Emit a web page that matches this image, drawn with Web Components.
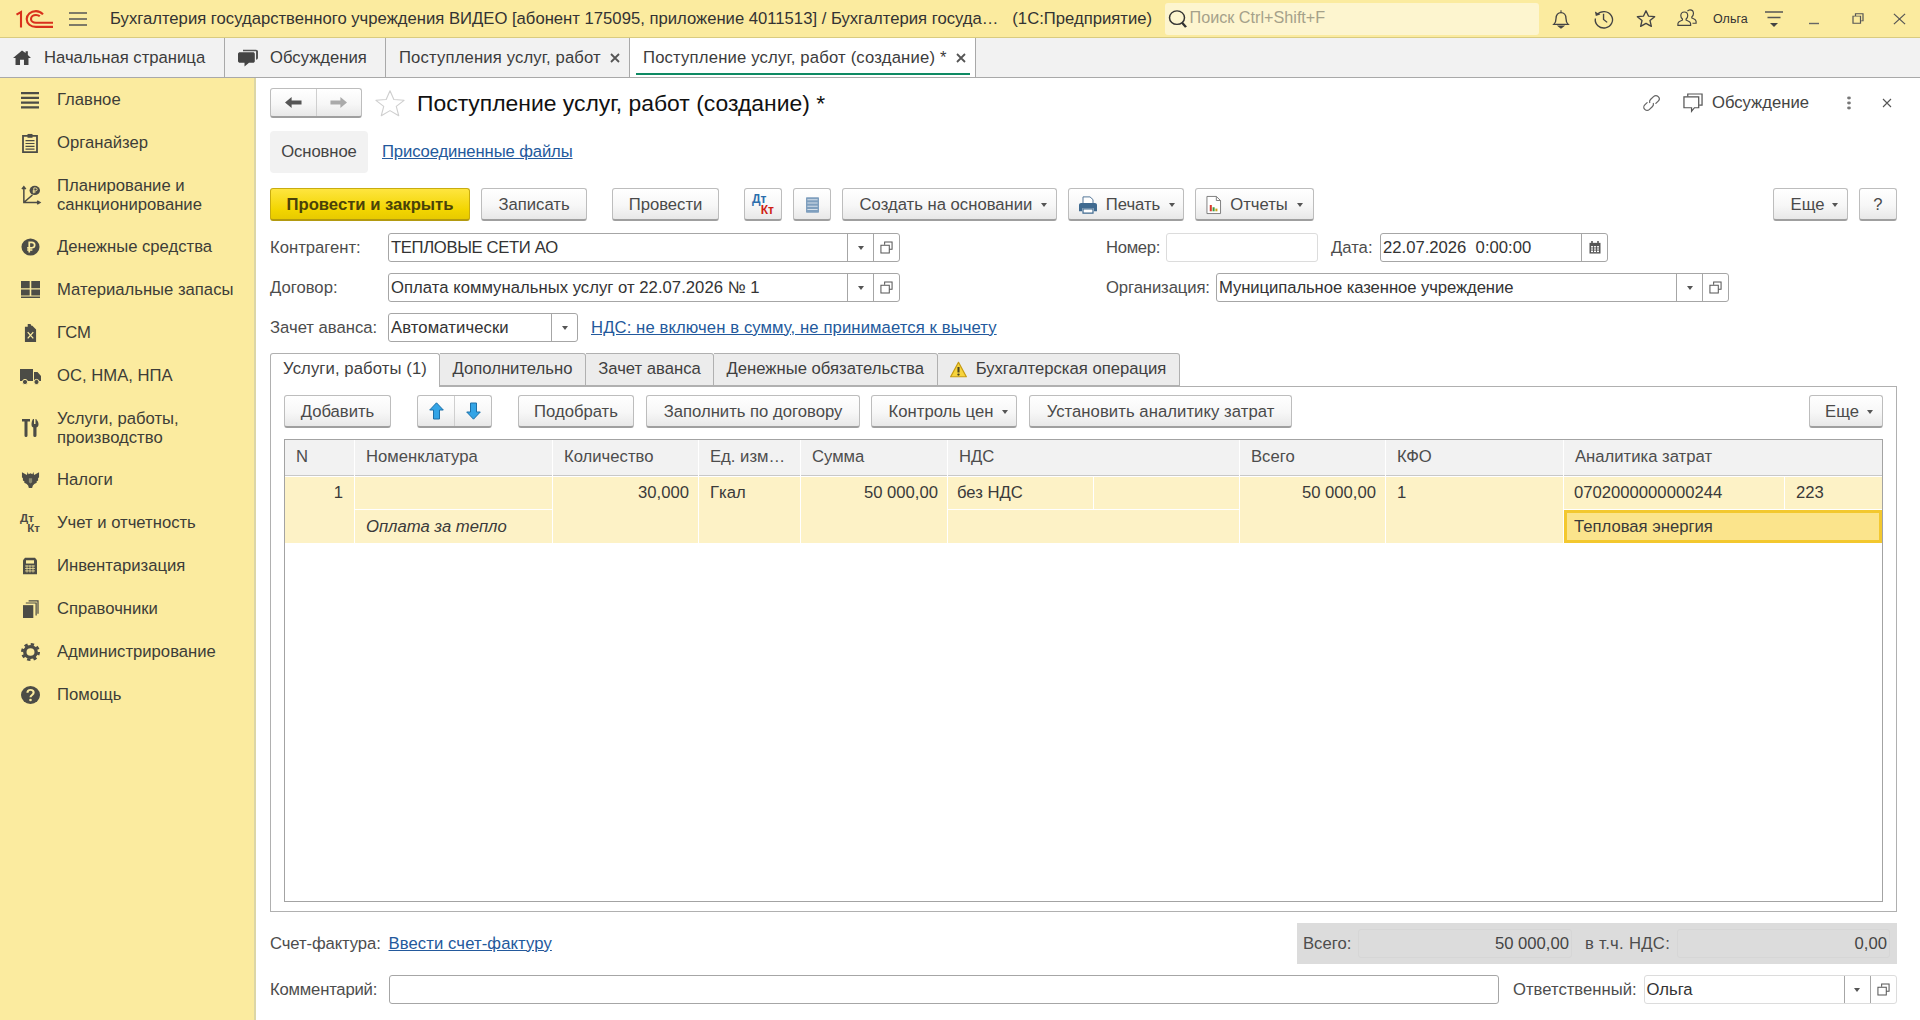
<!DOCTYPE html>
<html lang="ru"><head><meta charset="utf-8"><title>Поступление услуг, работ</title>
<style>
html,body{margin:0;height:100%;overflow:hidden;background:#fff}
body{font:16.67px "Liberation Sans",Arial,sans-serif;color:#333}
</style></head><body>
<x-app></x-app>
<script>
const ICONS={
 logo:[37,18,'<g fill="none" stroke="#d9301c" stroke-width="2.1"><path d="M.5 4.6 5 2v15.5"/><path d="M27 4.4C25 2.2 22.6 1.1 20 1.1c-5.400 0-9.300 3.600-9.300 8 0 4.500 4 7.800 9.300 7.800H37"/><path d="M23.800 6.300C22.800 5.400 21.500 5 20 5c-2.800 0-5 1.800-5 4 0 2.300 2.200 3.800 5 3.800H37"/></g>'],
 burger:[18,14,'<path d="M0 1h18M0 7h18M0 13h18" stroke="#555" stroke-width="1.400"/>'],
 search:[20,20,'<circle cx="9" cy="8.500" r="7.500" fill="none" stroke="#333" stroke-width="1.500"/><path d="M14 14l4 5" stroke="#333" stroke-width="2.500"/>'],
 bell:[20,24,'<path d="M2 18.500c2-2 2.500-4 2.500-7.500 0-4 2.300-6.800 5.500-6.800s5.500 2.800 5.500 6.800c0 3.500.5 5.500 2.500 7.500z" fill="none" stroke="#444" stroke-width="1.500"/><path d="M10 1.500v3M7 20.500h6l-3 2.500z" stroke="#444" fill="#444" stroke-width="1.200"/>'],
 history:[22,22,'<path d="M3.500 6.500A9.500 9.500 0 1 1 1.500 11" fill="none" stroke="#444" stroke-width="1.500"/><path d="M1 3l1 5 5-1.500z" fill="#444"/><path d="M10.500 5.500V12l4 3.500" fill="none" stroke="#444" stroke-width="1.500"/>'],
 starO:[22,22,'<path d="M11 2l2.700 6.200 6.800.7-5.100 4.500 1.500 6.700L11 16.600l-5.900 3.500 1.500-6.700L1.500 8.900l6.800-.7z" fill="none" stroke="#444" stroke-width="1.500" stroke-linejoin="round"/>'],
 users:[22,22,'<path d="M8 3.500c-2.500 0-3.800 2-3.800 4.300 0 1.700.8 3 1.800 3.800v1.200c-2 .8-5 1.800-5 4.200v2h14v-2c0-2.400-3-3.400-5-4.200v-1.200c1-.8 1.800-2.100 1.800-3.800 0-2.300-1.300-4.300-3.800-4.300z" fill="none" stroke="#444" stroke-width="1.300"/><path d="M11.500 2.500c.8-1 1.800-1.500 2.800-1.500 2.500 0 3.800 2 3.800 4.300 0 1.700-.8 3-1.800 3.800v1.200c2 .8 4.700 1.800 4.700 4.200v2H17" fill="none" stroke="#444" stroke-width="1.300"/>'],
 tri:[18,18,'<path d="M0 2h18M2.500 7.500h13" stroke="#555" stroke-width="1.400"/><path d="M5 13h8l-4 4z" fill="#444"/>'],
 min:[12,12,'<path d="M1 10.500h10" stroke="#666" stroke-width="1.400"/>'],
 restore:[12,14,'<path d="M1 4h7.500v9H1zM3.500 4V1H11v9H8.500" fill="none" stroke="#555" stroke-width="1.200"/>'],
 close:[14,14,'<path d="M1 1l12 12M13 1L1 13" stroke="#555" stroke-width="1.300"/>'],
 x:[10,10,'<path d="M1 1l8 8M9 1L1 9" stroke="#555" stroke-width="1.800"/>'],
 xthin:[10,10,'<path d="M1 1l8 8M9 1L1 9" stroke="#555" stroke-width="1.100"/>'],
 home:[20,17,'<path d="M10 .5L0 9h2.800v8h5v-6h4.400v6h5V9H20L16.500 5.800V1.500h-2.500v2z" fill="#444"/>'],
 chat:[20,24,'<path d="M5 2h13c1 0 2 1 2 2v8c0 1-1 2-2 2v-10H5z" fill="#555"/><path d="M2 5h13c1 0 1.800.8 1.800 1.800v9c0 1-.8 1.800-1.800 1.800H11l-4.500 4.500v-4.500H2c-1 0-2-.8-2-1.800v-9C0 5.800 1 5 2 5z" fill="#444"/>'],
 main:[18,20,'<path d="M0 2h18v2.600H0zM0 7h18v2.600H0zM0 12h18v2.600H0zM0 17h18v2.600H0z" fill="#4c4c46"/>'],
 org:[16,21,'<path d="M1 3h14v17H1z" fill="none" stroke="#4c4c46" stroke-width="1.800"/><path d="M5.500 1h5v4h-5z" fill="#4c4c46"/><path d="M3.500 8h9M3.500 11h9M3.500 14h9M3.500 17h9" stroke="#4c4c46" stroke-width="1.200"/>'],
 plan:[20,24,'<path d="M3 3v18h16M1 5l2-3 2 3M17 19l3 2-3 2M3 21L12 12" fill="none" stroke="#4c4c46" stroke-width="1.600"/><circle cx="14.500" cy="6.500" r="5.500" fill="#4c4c46"/><path d="M13.500 10V3.500h1.700a1.700 1.700 0 0 1 0 3.600H12.300M12.300 8.500h3" fill="none" stroke="#fbeb9f" stroke-width="1"/>'],
 money:[20,20,'<circle cx="10" cy="10" r="9.500" fill="#4c4c46"/><path d="M8.700 16V4.800h2.600a3 3 0 0 1 0 6.200H6.500M6.500 13.300h5.500" fill="none" stroke="#fbeb9f" stroke-width="1.800"/>'],
 mat:[19,21,'<path d="M0 1h8.700v8H0zM10.300 1H19v8h-8.700zM0 10.500h8.700v6.500H0zM10.300 10.500H19v6.500h-8.700zM0 18.300h19V20H0z" fill="#4c4c46"/>'],
 fuel:[14,20,'<path d="M1 3h3V0h3l1 2h1l4 4v14H1z" fill="#4c4c46"/><path d="M4 9l6 7M10 9l-6 7" stroke="#fbeb9f" stroke-width="1.400"/>'],
 truck:[21,18,'<path d="M0 2h13v12H0zM14 5h3.500L21 9v5h-7z" fill="#4c4c46"/><circle cx="5" cy="15" r="2.600" fill="#4c4c46" stroke="#fbeb9f"/><circle cx="16.500" cy="15" r="2.600" fill="#4c4c46" stroke="#fbeb9f"/>'],
 tools:[18,18,'<path d="M1 0h8v2.400H6.500V16.500a1.500 1.500 0 0 1-3 0V2.400H1z" fill="#4c4c46"/><path d="M12 0h1v5h1.500V0h1v1c1.500 1 2 2.500 2 4.500 0 1.500-.8 2.500-2 3V16.500a1.600 1.600 0 0 1-3.200 0V8.500C11 8 10.500 7 10.500 5.500c0-2 .5-4 1.500-5.500z" fill="#4c4c46"/>'],
 eagle:[20,20,'<path d="M7 1l1 2.500L10 2.500 12 3.500 13 1l.8 3.500L19 1.500v5.500l-1 1v2.500l-1.500 1V13l-2.500 1.500-1.500 1.500-.8 3h-3.400l-.8-3-1.500-1.500L3.500 13v-1.500l-1.500-1V8L1 7V1.500l5.200 3z" fill="#4c4c46"/><path d="M8.300 8h3.400v4.500L10 14l-1.700-1.500z" fill="#8a8a70"/>'],
 inv:[16,22,'<path d="M3 1h10l2 3v17H1V4z" fill="#4c4c46"/><path d="M4 4h8v4H4z" fill="#fbeb9f"/><path d="M3 11h10M3 14h10M3 17h10M5 10v9M8 10v9M11 10v9" stroke="#fbeb9f" stroke-width=".8"/>'],
 books:[16,21,'<path d="M0 6h11v15H0z" fill="#4c4c46"/><path d="M3 3.500h11V18M6 1h10v15" fill="none" stroke="#4c4c46" stroke-width="1.300"/>'],
 gear:[20,20,'<circle cx="10" cy="10" r="6" fill="none" stroke="#4c4c46" stroke-width="3.600"/><circle cx="10" cy="10" r="8.600" fill="none" stroke="#4c4c46" stroke-width="2.800" stroke-dasharray="3.500 3.250"/>'],
 help:[20,20,'<circle cx="10" cy="10" r="10" fill="#4c4c46"/><path d="M6.800 7.500C6.800 5.500 8.300 4.300 10 4.300c2 0 3.300 1.300 3.300 3 0 2.700-3.300 2.600-3.300 5.200" fill="none" stroke="#fbeb9f" stroke-width="2.200"/><circle cx="10" cy="15.500" r="1.400" fill="#fbeb9f"/>'],
 back:[18,14,'<path d="M0 7l7-6v3.800h10.500v4.400H7V13z" fill="#555"/>'],
 fwd:[18,14,'<path d="M18 7l-7-6v3.800H.5v4.400H11V13z" fill="#aaa"/>'],
 star:[32,32,'<path d="M16 2l4.100 10 10.900.9-8.300 7 2.600 10.600L16 24.700l-9.300 5.800 2.600-10.600-8.300-7L11.900 12z" fill="#fff" stroke="#cfcfcf" stroke-width="1.200" stroke-linejoin="round"/>'],
 link:[20,20,'<g transform="rotate(-45 10 10)" fill="none" stroke="#666" stroke-width="1.300" stroke-linecap="round"><path d="M7 6.500H3.500a3.500 3.500 0 0 0 0 7H8a3.500 3.500 0 0 0 3-1.800"/><path d="M13 13.500h3.500a3.500 3.500 0 0 0 0-7H12a3.500 3.500 0 0 0-3 1.800"/></g>'],
 disc:[21,23,'<path d="M5 4V1.200h15V14h-3" fill="none" stroke="#555" stroke-width="1.300"/><path d="M1 4.500h15.500v12.500h-4.500L9 21v-4H1z" fill="none" stroke="#555" stroke-width="1.300"/>'],
 dots:[6,18,'<circle cx="3" cy="2.500" r="1.900" fill="#777"/><circle cx="3" cy="9" r="1.900" fill="#777"/><circle cx="3" cy="15.500" r="1.900" fill="#777"/>'],
 list:[14,22,'<path d="M1 1.500h12c.5 0 1 .5 1 1v17c0 .5-.5 1-1 1H1c-.5 0-1-.5-1-1v-17c0-.5.500-1 1-1z" fill="#7f9fbe"/><path d="M1.500 4.500h11M1.500 8.500h11M1.500 12.500h11M1.500 16.500h11" stroke="#d5e0ea" stroke-width="1.300"/>'],
 print:[18,20,'<path d="M4 1h7l3 3v5H4z" fill="#fff" stroke="#4d7193"/><path d="M0 10c0-1.500 1-2.300 2-2.300h14c1 0 2 .8 2 2.300v7h-3v-3H3v3H0z" fill="#3f6a90"/><path d="M4 14.500h10V19H4z" fill="#fff" stroke="#3f6a90" stroke-width="1.200"/>'],
 report:[16,20,'<path d="M1 .5h10l4.500 4.500v14.500H1z" fill="#fff" stroke="#777"/><path d="M11 .5V5h4.500" fill="none" stroke="#777"/><path d="M4 10h2.200v7H4z" fill="#d93a2b"/><path d="M7 12.500h2.200V17H7z" fill="#3d9a40"/><path d="M10 14h2.200v3H10z" fill="#c9a21c"/>'],
 up:[15,18,'<path d="M7.500.8L14.300 8H10.500v9H4.500V8H.7z" fill="#33a4e6" stroke="#1d70a8"/>'],
 down:[15,18,'<path d="M7.500 17.200L14.300 10H10.500V1H4.500v9H.7z" fill="#33a4e6" stroke="#1d70a8"/>'],
 warn:[18,20,'<path d="M9 1.500L17.300 18.500H.7z" fill="#f7d43c" stroke="#c79c12" stroke-width="1.300" stroke-linejoin="round"/><path d="M9 7v6.500" stroke="#4a4320" stroke-width="2.200"/><circle cx="9" cy="16" r="1.300" fill="#4a4320"/>'],
 open:[14,14,'<path d="M5 4V1h8v8h-3" fill="none" stroke="#555" stroke-width="1.100"/><path d="M1 4.500h9v8.500H1z" fill="none" stroke="#555" stroke-width="1.100"/>'],
 cal:[12,14,'<path d="M.5 2h11v11.500H.5z" fill="#555"/><path d="M3 0v3M9 0v3" stroke="#555" stroke-width="1.600"/><path d="M2 5.500h8v6.500H2z" fill="#fff"/><path d="M2 7.500h8M2 9.800h8M4.500 5.500v6.500M7.500 5.500v6.500" stroke="#555"/>']
};
class XIcon extends HTMLElement{
 connectedCallback(){
  if(this.shadowRoot)return;
  const n=this.getAttribute('name'),ic=ICONS[n],s=this.attachShadow({mode:'open'});
  const w=this.getAttribute('w')||ic[0],h=this.getAttribute('h')||ic[1];
  s.innerHTML=`<style>:host{display:inline-flex;flex:none;line-height:0}svg{display:block;overflow:visible}</style><svg width="${w}" height="${h}" viewBox="0 0 ${ic[0]} ${ic[1]}" preserveAspectRatio="none">${ic[2]}</svg>`;
 }
}
customElements.define('x-icon',XIcon);
function def(name,css,html){
 customElements.define(name,class extends HTMLElement{
  constructor(){super();this.attachShadow({mode:'open'}).innerHTML=`<style>${css}</style>${typeof html==='function'?html(this):html}`;}
 });
}
def('x-caret',':host{display:inline-block;flex:none;width:0;height:0;border:3.500px solid transparent;border-top:4px solid #555;border-bottom:0}','');
def('x-topbar',`:host{display:flex;align-items:center;height:37px;background:#fbeb9f;border-bottom:1px solid #d9cb80;color:#333;white-space:nowrap}
 .logo{margin-left:16px;margin-right:16px}
 .title{margin-left:23px;width:1041px;flex:none;white-space:pre}
 .search{margin-left:13.500px;width:375px;height:32px;box-sizing:border-box;background:#fdf5cf;border-radius:3px;display:flex;align-items:center;padding-left:3px;gap:2px;color:#a5a18a;font-size:16.200px}
 .search span{margin-top:-2px}
 .i{flex:none;width:42px;display:flex;justify-content:center}
 .ol{font-size:12.500px;width:44px;flex:none;margin-left:5px;margin-right:-5px}`,
 `<x-icon class="logo" name="logo"></x-icon><x-icon name="burger"></x-icon>
 <div class="title">Бухгалтерия государственного учреждения ВИДЕО [абонент 175095, приложение 4011513] / Бухгалтерия госуда…   (1С:Предприятие)</div>
 <div class="search"><x-icon name="search" w="20" h="18"></x-icon><span>Поиск Ctrl+Shift+F</span></div>
 <div class="i" style="margin-left:1px"><x-icon name="bell" w="18" h="20"></x-icon></div><div class="i" style="margin-left:1px"><x-icon name="history" w="20" h="19"></x-icon></div><div class="i"><x-icon name="starO" w="20" h="19"></x-icon></div><div class="i" style="margin-left:-1px"><x-icon name="users" w="20" h="19"></x-icon></div>
 <div class="ol">Ольга</div><div class="i" style="width:38px;margin-left:3px"><x-icon name="tri"></x-icon></div>
 <div class="i"><x-icon name="min"></x-icon></div><div class="i" style="margin-left:2px"><x-icon name="restore" w="12" h="11"></x-icon></div><div class="i" style="margin-left:-1px"><x-icon name="close" w="13" h="12"></x-icon></div>`);
def('x-tab',`:host{display:flex;align-items:center;flex:none;height:39px;box-sizing:border-box;border-right:1px solid #a9a9a9;position:relative;white-space:nowrap;color:#3c3c3c}
 :host([active]){background:#fff}
 :host([active])::after{content:"";position:absolute;left:6px;right:5px;bottom:2px;height:2px;background:#0e8a63}`,`<slot></slot>`);
def('x-tabbar',`:host{display:flex;height:40px;box-sizing:border-box;background:#f2f2f2;border-bottom:1px solid #a9a9a9}`,
 `<x-tab style="width:225px;padding-left:13px;gap:13px"><x-icon name="home" w="18" h="15"></x-icon>Начальная страница</x-tab>
 <x-tab style="width:161px;padding-left:13px;gap:12px"><x-icon name="chat" h="20"></x-icon>Обсуждения</x-tab>
 <x-tab style="width:244px;padding-left:13px;gap:9px;letter-spacing:.15px">Поступления услуг, работ<x-icon name="x"></x-icon></x-tab>
 <x-tab active style="width:346px;padding-left:13px;gap:9px;letter-spacing:.18px">Поступление услуг, работ (создание) *<x-icon name="x"></x-icon></x-tab>`);
def('x-nav-item',`:host{display:flex;align-items:center;height:43px;color:#3d3d38;line-height:19px}
 :host([two]){height:61px}
 .ic{flex:none;width:57px;padding-left:3px;box-sizing:border-box;display:flex;justify-content:center}`,
 t=>`<div class="ic"><slot name="ic"></slot></div><div><slot></slot></div>`);
def('x-sidebar',`:host{display:block;flex:none;width:254px;background:#fbeb9f;border-right:2px solid #dcd6a6}
 .dk{font:bold 11.500px/10px "Liberation Sans",sans-serif;color:#4c4c46;width:20px;display:block}
 .dk b{display:block}.dk b+b{text-align:right}`,
 `<x-nav-item><x-icon slot="ic" name="main" h="19"></x-icon>Главное</x-nav-item>
 <x-nav-item><x-icon slot="ic" name="org" h="20"></x-icon>Органайзер</x-nav-item>
 <x-nav-item two><x-icon slot="ic" name="plan" w="19" h="20"></x-icon>Планирование и<br>санкционирование</x-nav-item>
 <x-nav-item><x-icon slot="ic" name="money" w="19" h="18"></x-icon>Денежные средства</x-nav-item>
 <x-nav-item><x-icon slot="ic" name="mat" w="19" h="19"></x-icon>Материальные запасы</x-nav-item>
 <x-nav-item><x-icon slot="ic" name="fuel" w="13" h="18"></x-icon>ГСМ</x-nav-item>
 <x-nav-item><x-icon slot="ic" name="truck"></x-icon>ОС, НМА, НПА</x-nav-item>
 <x-nav-item two><x-icon slot="ic" name="tools"></x-icon>Услуги, работы,<br>производство</x-nav-item>
 <x-nav-item><x-icon slot="ic" name="eagle" w="19" h="18"></x-icon>Налоги</x-nav-item>
 <x-nav-item><span slot="ic" class="dk"><b>Дт</b><b>Кт</b></span>Учет и отчетность</x-nav-item>
 <x-nav-item><x-icon slot="ic" name="inv" w="16" h="18"></x-icon>Инвентаризация</x-nav-item>
 <x-nav-item><x-icon slot="ic" name="books" w="15" h="18"></x-icon>Справочники</x-nav-item>
 <x-nav-item><x-icon slot="ic" name="gear" w="19" h="18"></x-icon>Администрирование</x-nav-item>
 <x-nav-item><x-icon slot="ic" name="help" w="19" h="18"></x-icon>Помощь</x-nav-item>`);
def('x-btn',`:host{display:inline-flex;align-items:center;justify-content:center;flex:none;height:33px;box-sizing:border-box;padding-top:1px;border:1px solid #bdbdbd;border-bottom:2px solid #9f9f9f;border-radius:3px;background:linear-gradient(#fff,#f7f7f7 55%,#e8e8e8);color:#4a4a4a;white-space:nowrap}
 :host([primary]){background:linear-gradient(#fee53f,#f2d500 70%,#e7ca00);border-color:#c8ac10;border-bottom-color:#b39a10;font-weight:bold;color:#4a4208}`,`<slot></slot>`);
def('x-link',`:host{color:#23599c;text-decoration:underline;white-space:nowrap}`,`<slot></slot>`);
def('x-label',`:host{color:#4d4d4d;white-space:nowrap;flex:none}`,`<slot></slot>`);
def('x-field',`:host{display:flex;flex:none;height:29px;box-sizing:border-box;border:1px solid #a6a6a6;border-radius:3px;background:#fff;color:#333;white-space:pre;align-items:stretch}
 :host([light]){border-color:#dcdcdc}
 .t{flex:1;min-width:0;padding-left:2px;line-height:27px;overflow:hidden}
 .b{flex:none;width:26px;box-sizing:border-box;border-left:1px solid #a6a6a6;display:flex;align-items:center;justify-content:center}`,
 t=>{const b=(t.getAttribute('btn')||'').split(' ').filter(Boolean).map(k=>k=='drop'?'<div class="b"><x-caret></x-caret></div>':`<div class="b"><x-icon name="${k}" w="${k=='open'?13:12}" h="13"></x-icon></div>`).join('');
  return `<div class="t"><slot></slot></div>${b}`;});
def('x-row',`:host{display:flex;align-items:center;height:29px;margin-top:11px}`,`<slot></slot>`);
def('x-toolbar',`:host{display:flex;align-items:center;gap:11px}`,`<slot></slot>`);
def('x-ftabs',`:host{display:flex;height:34px;margin-top:11px;box-sizing:border-box;position:relative;z-index:1}
 .t{box-sizing:border-box;height:33px;display:flex;align-items:center;justify-content:center;background:#ececec;border:1px solid #b0b0b0;border-left:0;border-radius:0 3px 0 0;white-space:nowrap;color:#3f3f3f;gap:9px;padding-bottom:1px}
 .a{background:#fff;height:34px;border-left:1px solid #b0b0b0;border-bottom:0;border-radius:3px 3px 0 0;padding-bottom:3px;letter-spacing:.1px}`,
 `<div class="t a" style="width:170px">Услуги, работы (1)</div><div class="t" style="width:146px">Дополнительно</div><div class="t" style="width:128px">Зачет аванса</div><div class="t" style="width:223.500px">Денежные обязательства</div><div class="t" style="width:242px"><x-icon name="warn" w="17" h="17"></x-icon>Бухгалтерская операция</div>`);
def('x-cell',`:host{display:flex;align-items:center;padding:0 10px 0 11px;background:#fdf2c6;color:#3a3a3a;white-space:nowrap;overflow:hidden;min-width:0}
 :host([h]){background:#f2f2f2;color:#4d4d4d;padding-bottom:2px;box-sizing:border-box;box-shadow:0 1px 0 #c8c8c8}
 :host([r]){justify-content:flex-end;align-items:flex-start;padding-top:6px;padding-right:9px}
 :host([top]){align-items:flex-start;padding-top:6px}
 :host([sel]){background:#fbe48c;border:3px solid #f3c82f;padding-left:7px;box-sizing:border-box}`,`<slot></slot>`);
def('x-table',`:host{display:block;margin-top:11px;height:463px;box-sizing:border-box;border:1px solid #a3a3a3;background:#fff}
 .g{display:grid;grid-template-columns:69px 197px 145px 101px 146px 145px 145px 145px 177px 220px 1fr;grid-template-rows:35px 33px 33px;gap:1px;background:#fff}
 i{font-style:italic}`,
 `<div class="g">
 <x-cell h>N</x-cell><x-cell h>Номенклатура</x-cell><x-cell h>Количество</x-cell><x-cell h>Ед. изм…</x-cell><x-cell h>Сумма</x-cell><x-cell h style="grid-column:span 2">НДС</x-cell><x-cell h>Всего</x-cell><x-cell h>КФО</x-cell><x-cell h style="grid-column:span 2">Аналитика затрат</x-cell>
 <x-cell r style="grid-row:span 2;margin-top:1px;padding-right:11px">1</x-cell><x-cell style="margin-top:1px"></x-cell><x-cell r style="grid-row:span 2;margin-top:1px">30,000</x-cell><x-cell top style="grid-row:span 2;margin-top:1px">Гкал</x-cell><x-cell r style="grid-row:span 2;margin-top:1px">50 000,00</x-cell><x-cell style="margin-top:1px;padding-left:9px">без НДС</x-cell><x-cell style="margin-top:1px"></x-cell><x-cell r style="grid-row:span 2;margin-top:1px">50 000,00</x-cell><x-cell top style="grid-row:span 2;margin-top:1px">1</x-cell><x-cell style="margin-top:1px;padding-left:10px">0702000000000244</x-cell><x-cell style="margin-top:1px;padding-left:11px">223</x-cell>
 <x-cell style="grid-column:2;grid-row:3"><i>Оплата за тепло</i></x-cell><x-cell style="grid-column:6/8;grid-row:3"></x-cell><x-cell sel style="grid-column:10/12;grid-row:3">Тепловая энергия</x-cell>
 </div>`);
def('x-panel',`:host{display:block;flex:none;height:526px;box-sizing:border-box;border:1px solid #b0b0b0;padding:8px 13px 0 13px}`,`<slot></slot>`);
def('x-totals',`:host{display:flex;align-items:center;margin-left:auto;width:600px;height:41px;box-sizing:border-box;background:#dcdcdc;padding:0 6px;color:#4d4d4d;white-space:nowrap}
 .v{box-sizing:border-box;height:29px;width:214px;flex:none;border:1px solid #d6d6d6;border-radius:3px;display:flex;align-items:center;justify-content:flex-end;padding-right:2px;color:#444}`,
 `<span style="width:55px;flex:none">Всего:</span><div class="v">50 000,00</div><span style="width:92px;flex:none;margin-left:13px;letter-spacing:.3px">в т.ч. НДС:</span><div class="v" style="width:213px">0,00</div>`);
def('x-form',`:host{display:flex;flex-direction:column;flex:1;min-width:0;padding:10px 23px 0 14px;background:#fff;overflow:hidden}
 .hd{display:flex;align-items:center;height:30px}
 .nav{display:flex;width:92px;height:30px;box-sizing:border-box;border:1px solid #bdbdbd;border-bottom:2px solid #9f9f9f;border-radius:3px;background:linear-gradient(#fff,#f7f7f7 55%,#e8e8e8)}
 .nav div{flex:1;display:flex;align-items:center;justify-content:center}.nav div+div{border-left:1px solid #cfcfcf}
 h1{font:22.900px "Liberation Sans",sans-serif;color:#111;margin:0 0 0 12px;white-space:nowrap}
 .subs{display:flex;align-items:center;margin-top:13px;height:42px}
 .cur{width:98px;height:42px;background:#f2f2f2;border-radius:4px;display:flex;align-items:center;justify-content:center;color:#444;margin-right:14px;letter-spacing:-.1px}
 x-toolbar.main{margin-top:15px}
 x-row.first{margin-top:12px}
 .dk{font:bold 12px/10.500px "Liberation Sans",sans-serif;width:22px}.dk b{display:block;color:#2b6ead}.dk b+b{text-align:right;color:#cf1f14}
 .inv{display:flex;align-items:center;height:41px;margin-top:11px}
 .grp{display:flex;margin-left:15px;width:75px;height:33px;box-sizing:border-box;border:1px solid #bdbdbd;border-bottom:2px solid #9f9f9f;border-radius:3px;background:linear-gradient(#fff,#f7f7f7 55%,#e8e8e8)}
 .grp div{flex:1;display:flex;align-items:center;justify-content:center}.grp div+div{border-left:1px solid #cfcfcf}`,
 `<div class="hd"><div class="nav"><div><x-icon name="back" w="17" h="13"></x-icon></div><div><x-icon name="fwd" w="17" h="13"></x-icon></div></div>
  <x-icon name="star" w="30" h="28" style="margin-left:13px"></x-icon><h1 style="margin-left:12px">Поступление услуг, работ (создание) *</h1>
  <x-icon name="link" w="19" h="18" style="margin-left:auto"></x-icon><x-icon name="disc" w="20" h="20" style="margin-left:22px"></x-icon><span style="margin-left:9px;color:#444">Обсуждение</span><x-icon name="dots" h="14" style="margin-left:36.500px"></x-icon><x-icon name="xthin" style="margin-left:30px;margin-right:5.500px"></x-icon></div>
 <div class="subs"><div class="cur">Основное</div><x-link style="letter-spacing:-.12px">Присоединенные файлы</x-link></div>
 <x-toolbar class="main"><x-btn primary style="width:200px">Провести и закрыть</x-btn><x-btn style="width:106px">Записать</x-btn><x-btn style="width:107px;margin-left:14px">Провести</x-btn>
  <x-btn style="width:38px;margin-left:14px"><span class="dk"><b>Дт</b><b>Кт</b></span></x-btn><x-btn style="width:38px"><x-icon name="list" w="13" h="18"></x-icon></x-btn>
  <x-btn style="width:215px;gap:9px;padding-left:8px">Создать на основании<x-caret></x-caret></x-btn><x-btn style="width:116px;gap:9px;padding-left:2px"><x-icon name="print" h="18"></x-icon>Печать<x-caret></x-caret></x-btn><x-btn style="width:119px;gap:9px"><x-icon name="report" w="15" h="18"></x-icon>Отчеты<x-caret></x-caret></x-btn>
  <x-btn style="width:75px;gap:8px;margin-left:auto;padding-left:8px">Еще<x-caret></x-caret></x-btn><x-btn style="width:38px">?</x-btn></x-toolbar>
 <x-row class="first"><x-label style="width:118px">Контрагент:</x-label><x-field btn="drop open" style="width:512px;letter-spacing:-.35px">ТЕПЛОВЫЕ СЕТИ АО</x-field><x-label style="margin-left:206px;width:60px;letter-spacing:-.3px">Номер:</x-label><x-field light style="width:152px"></x-field><x-label style="margin-left:13px;width:49px">Дата:</x-label><x-field btn="cal" style="width:228px">22.07.2026  0:00:00</x-field></x-row>
 <x-row><x-label style="width:118px">Договор:</x-label><x-field btn="drop open" style="width:512px;letter-spacing:.03px">Оплата коммунальных услуг от 22.07.2026 № 1</x-field><x-label style="margin-left:206px;width:110px;letter-spacing:-.1px">Организация:</x-label><x-field btn="drop open" style="width:513px;letter-spacing:-.08px">Муниципальное казенное учреждение</x-field></x-row>
 <x-row><x-label style="width:118px">Зачет аванса:</x-label><x-field btn="drop" style="width:190px;letter-spacing:.1px">Автоматически</x-field><x-link style="margin-left:13px;letter-spacing:.1px">НДС: не включен в сумму, не принимается к вычету</x-link></x-row>
 <x-ftabs></x-ftabs>
 <x-panel style="margin-top:-1px"><x-toolbar class="sub"><x-btn style="width:107px">Добавить</x-btn><div class="grp"><div><x-icon name="up"></x-icon></div><div><x-icon name="down"></x-icon></div></div>
  <x-btn style="width:116px;margin-left:15px">Подобрать</x-btn><x-btn style="width:214px;margin-left:1px">Заполнить по договору</x-btn><x-btn style="width:146px;gap:9px;padding-left:9px">Контроль цен<x-caret></x-caret></x-btn><x-btn style="width:263px;margin-left:1px;letter-spacing:.06px">Установить аналитику затрат</x-btn><x-btn style="width:74px;gap:8px;margin-left:auto;padding-left:6px">Еще<x-caret></x-caret></x-btn></x-toolbar>
  <x-table></x-table></x-panel>
 <div class="inv"><x-label style="width:118.500px;letter-spacing:-.1px">Счет-фактура:</x-label><x-link style="letter-spacing:.1px">Ввести счет-фактуру</x-link><x-totals></x-totals></div>
 <x-row><x-label style="width:118.500px;letter-spacing:-.2px">Комментарий:</x-label><x-field style="width:1110.500px"></x-field><x-label style="margin-left:14px;width:130.500px">Ответственный:</x-label><x-field light btn="drop open" style="width:253px">Ольга</x-field></x-row>`);
def('x-app',`:host{display:flex;flex-direction:column;height:1020px;overflow:hidden}
 .m{display:flex;flex:1;min-height:0}`,`<x-topbar></x-topbar><x-tabbar></x-tabbar><div class="m"><x-sidebar></x-sidebar><x-form></x-form></div>`);
</script>
</body></html>
